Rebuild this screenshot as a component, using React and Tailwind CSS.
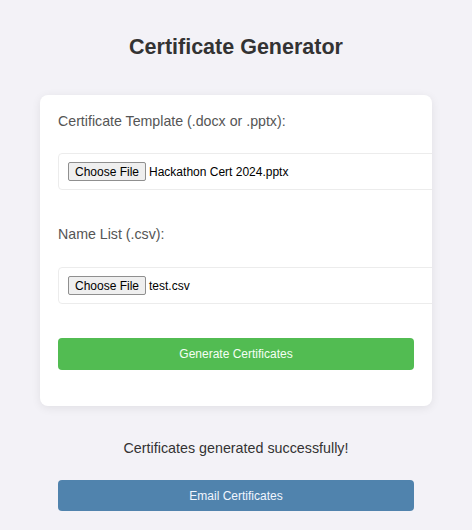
import React from "react";

function FileRow({ name, mt }) {
  return (
    <div className={`${mt} -mr-[24px] box-border flex h-[37px] items-center rounded-[4px] border border-[#ececec] bg-white pl-[9px]`}>
      <span className="flex h-[19px] items-center rounded-[2px] border border-[#8f8f8f] bg-[#efefef] px-[6px] text-[12px] leading-none text-black">
        Choose File
      </span>
      <span className="ml-[3px] text-[12px] text-black">{name}</span>
    </div>
  );
}

export default function App() {
  return (
    <div className="min-h-[530px] bg-[#f3f2f7] font-['Liberation_Sans',Arial,sans-serif]">
      <div className="flex flex-col items-center pt-[33px]">
        <h1 className="text-[21.5px] font-bold leading-[28px] text-[#333]">Certificate Generator</h1>
        <div className="mt-[34px] w-[392px] overflow-hidden rounded-[8px] bg-white px-[18px] pb-[36px] pt-[16px] shadow-[0_2px_10px_rgba(0,0,0,0.08)]">
          <div className="text-[14.2px] leading-[20px] text-[#555]">Certificate Template (.docx or .pptx):</div>
          <FileRow name="Hackathon Cert 2024.pptx" mt="mt-[22px]" />
          <div className="mt-[34px] text-[14.2px] leading-[20px] text-[#555]">Name List (.csv):</div>
          <FileRow name="test.csv" mt="mt-[23px]" />
          <button className="mt-[34px] flex h-[32px] w-full items-center justify-center rounded-[4px] bg-[#52bc52] text-[12px] text-[#f4fff4]">
            Generate Certificates
          </button>
        </div>
        <div className="mt-[32px] text-[14.3px] leading-[20px] text-[#333]">Certificates generated successfully!</div>
        <button className="mt-[22px] flex h-[31px] w-[356px] items-center justify-center rounded-[4px] bg-[#5083ad] text-[12px] text-[#f0f6ff]">
          Email Certificates
        </button>
      </div>
    </div>
  );
}
